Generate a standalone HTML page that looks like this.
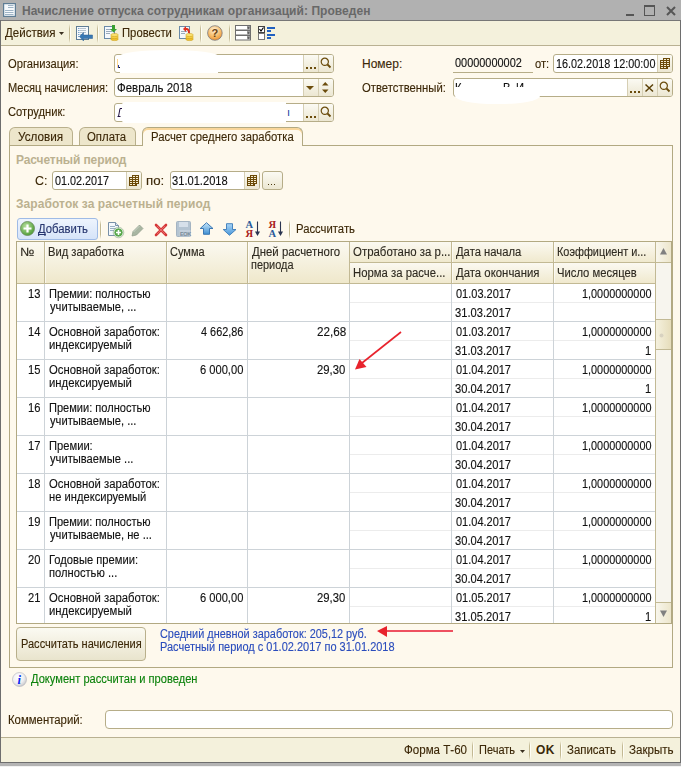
<!DOCTYPE html><html><head><meta charset="utf-8"><style>
*{margin:0;padding:0;box-sizing:border-box}
html,body{width:681px;height:767px;overflow:hidden;background:#c4c4c4}
body{position:relative;font-family:"Liberation Sans",sans-serif}
.t{position:absolute;font:11px/13px "Liberation Sans",sans-serif;white-space:pre;color:#1c1c1c;letter-spacing:0.2px}
.f{position:absolute;font:12px/13px "Liberation Sans",sans-serif;white-space:pre;color:#111;transform-origin:0 0;-webkit-text-stroke:0.12px currentColor}
.w4{letter-spacing:0.4px}
.tb{color:#3c2808}
.b{font-weight:bold}
.grp{color:#bbb190;font:bold 12px/13px "Liberation Sans",sans-serif;letter-spacing:-0.1px}
.fld{position:absolute;background:#fff;border:1px solid #b6ad88;border-radius:3px}
.btn{position:absolute;background:linear-gradient(#fbfaf3,#ece7d2);border-left:1px solid #d6cfb4}
.sep{position:absolute;width:2px;background:linear-gradient(90deg,#c3b993 50%,#fffef6 50%);-webkit-mask-image:linear-gradient(transparent,#000 25%,#000 75%,transparent)}
svg{position:absolute;overflow:visible}
</style></head><body>
<div style="position:absolute;left:0px;top:0px;width:681px;height:767px;background:#c4c4c4"></div>
<div style="position:absolute;left:0px;top:0px;width:681px;height:20px;background:#b1b1b1"></div>
<div style="position:absolute;left:0px;top:20px;width:681px;height:1px;background:#777"></div>
<div style="position:absolute;left:0px;top:20px;width:1px;height:743px;background:#6e6e6e"></div>
<div style="position:absolute;left:680px;top:20px;width:1px;height:743px;background:#6e6e6e"></div>
<div style="position:absolute;left:1px;top:21px;width:679px;height:24px;background:#f4f1dc"></div>
<div style="position:absolute;left:1px;top:45px;width:679px;height:1px;background:#b9b192"></div>
<div style="position:absolute;left:1px;top:46px;width:679px;height:691px;background:#fef9ed"></div>
<div style="position:absolute;left:1px;top:737px;width:679px;height:1px;background:#b9b192"></div>
<div style="position:absolute;left:1px;top:738px;width:679px;height:24px;background:#f4f1dc"></div>
<div style="position:absolute;left:0px;top:762px;width:681px;height:1px;background:#6e6e6e"></div>
<div style="position:absolute;left:0px;top:763px;width:681px;height:3px;background:#b4b4b4"></div>
<div style="position:absolute;left:0px;top:766px;width:681px;height:1px;background:#f2f2f2"></div>
<svg style="left:3px;top:3px" width="13" height="14"><rect x="0.6" y="0.6" width="11.8" height="12.8" fill="#f6f9fc" stroke="#5f7d95" stroke-width="1.2"/><g stroke="#9fb4c6"><line x1="5" y1="2.5" x2="10.5" y2="2.5"/><line x1="5" y1="4.5" x2="10.5" y2="4.5"/><line x1="2" y1="7.5" x2="10.5" y2="7.5"/><line x1="2" y1="9.5" x2="10.5" y2="9.5"/><line x1="2" y1="11.5" x2="10.5" y2="11.5"/></g></svg>
<div class="t b" style="left:22px;top:5px;font-size:12px;color:#686868;letter-spacing:0.05px">Начисление отпуска сотрудникам организаций: Проведен</div>
<div style="position:absolute;left:626px;top:14px;width:8px;height:2px;background:#555"></div>
<div style="position:absolute;left:644px;top:5px;width:11px;height:11px;border:1px solid #555;border-top-width:2px"></div>
<svg style="left:666px;top:6px" width="10" height="10"><path d="M1 1L9 9M9 1L1 9" stroke="#555" stroke-width="2"/></svg>
<div class="f tb" style="left:5.00px;top:27px;transform:scaleX(0.9608);">Действия</div>
<svg style="left:59px;top:32px" width="5" height="3"><path d="M0 0H5L2.5 3Z" fill="#3a3020"/></svg>
<div class="sep" style="left:69px;top:24px;height:19px"></div>
<svg style="left:76px;top:26px" width="17" height="15"><rect x="0.5" y="0.5" width="12" height="13" fill="#f6f9fc" stroke="#5f7d95"/><g stroke="#b4c2ce"><line x1="4" y1="2.5" x2="10" y2="2.5"/><line x1="4" y1="4.5" x2="10" y2="4.5"/><line x1="4" y1="6.5" x2="10" y2="6.5"/><line x1="4" y1="8.5" x2="6" y2="8.5"/></g><g stroke="#7aa4cc"><line x1="2" y1="2.5" x2="3.5" y2="2.5"/><line x1="2" y1="4.5" x2="3.5" y2="4.5"/><line x1="2" y1="6.5" x2="3.5" y2="6.5"/><line x1="2" y1="8.5" x2="3.5" y2="8.5"/><line x1="2" y1="10.5" x2="3.5" y2="10.5"/></g><path d="M3.5 10.5L7.5 6.5V9H16.5V12.5H7.5V15Z" fill="#3878b4" stroke="#2a5e92" stroke-width="0.5"/></svg>
<div class="sep" style="left:97px;top:24px;height:19px"></div>
<svg style="left:104px;top:25px" width="15" height="16"><rect x="0.5" y="1.5" width="10" height="12" fill="#f4f8fc" stroke="#6a8aa8"/><g stroke="#9ab"><line x1="2" y1="4.5" x2="8" y2="4.5"/><line x1="2" y1="6.5" x2="8" y2="6.5"/><line x1="2" y1="8.5" x2="6" y2="8.5"/></g><path d="M8 0V4H6L9.5 7.5L13 4H11V0Z" fill="#3aa030"/><g stroke="#c89a10" stroke-width="0.5"><ellipse cx="10.5" cy="14" rx="3.8" ry="1.6" fill="#f0c030"/><ellipse cx="10.5" cy="12" rx="3.8" ry="1.6" fill="#f6d048"/><ellipse cx="10.5" cy="10" rx="3.8" ry="1.6" fill="#fae070"/></g></svg>
<div class="f tb" style="left:122.06px;top:27px;transform:scaleX(0.9400);">Провести</div>
<svg style="left:179px;top:25px" width="15" height="16"><rect x="0.5" y="1.5" width="10" height="12" fill="#f4f8fc" stroke="#6a8aa8"/><g stroke="#9ab"><line x1="2" y1="6.5" x2="8" y2="6.5"/><line x1="2" y1="8.5" x2="6" y2="8.5"/></g><path d="M4 4L7 1V3C10 3 11 5 11 8H9C9 6 8.5 5 7 5V7Z" fill="#e03020"/><g stroke="#c89a10" stroke-width="0.5"><ellipse cx="10.5" cy="14" rx="3.8" ry="1.6" fill="#f0c030"/><ellipse cx="10.5" cy="12" rx="3.8" ry="1.6" fill="#f6d048"/><ellipse cx="10.5" cy="10" rx="3.8" ry="1.6" fill="#fae070"/></g></svg>
<div class="sep" style="left:200px;top:24px;height:19px"></div>
<svg style="left:207px;top:25px" width="16" height="16"><defs><radialGradient id="hg" cx="0.45" cy="0.3" r="0.75"><stop offset="0" stop-color="#fff0d8"/><stop offset="0.55" stop-color="#f8c070"/><stop offset="1" stop-color="#e88a28"/></radialGradient></defs><circle cx="7.9" cy="8" r="7.3" fill="url(#hg)" stroke="#7a7a80" stroke-width="0.8"/><text x="7.9" y="12.3" font-family="Liberation Sans" font-weight="bold" font-size="11" text-anchor="middle" fill="#6a4212">?</text></svg>
<div class="sep" style="left:229px;top:24px;height:19px"></div>
<svg style="left:235px;top:25px" width="16" height="16"><g fill="#fff" stroke="#6e6e6e"><rect x="0.5" y="0.5" width="15" height="4.5"/><rect x="0.5" y="5.5" width="15" height="4.5"/><rect x="0.5" y="10.5" width="15" height="4.5"/></g><g fill="#9a9a9a"><rect x="12" y="1" width="3" height="3.5"/><rect x="12" y="6" width="3" height="3.5"/><rect x="12" y="11" width="3" height="3.5"/></g><g fill="#222"><path d="M12.5 2.5H14.5L13.5 3.7Z"/><path d="M12.5 7.5H14.5L13.5 8.7Z"/><path d="M12.5 12.5H14.5L13.5 13.7Z"/></g></svg>
<svg style="left:258px;top:26px" width="17" height="14"><rect x="0.5" y="0.5" width="6" height="6" fill="#fff" stroke="#444"/><path d="M1.5 3L3 5L5.5 1.5" stroke="#000" fill="none" stroke-width="1.2"/><rect x="0.5" y="7.5" width="6" height="6" fill="#fff" stroke="#777"/><g fill="#2060c0"><rect x="9" y="1" width="8" height="2"/><rect x="9" y="4" width="4" height="2"/><rect x="9" y="8" width="8" height="2"/><rect x="9" y="11" width="4" height="2"/></g></svg>
<div class="f tb" style="left:8.07px;top:58px;transform:scaleX(0.9315);">Организация:</div>
<div class="f tb" style="left:8.08px;top:82px;transform:scaleX(0.9238);">Месяц начисления:</div>
<div class="f tb" style="left:8.07px;top:106px;transform:scaleX(0.9322);">Сотрудник:</div>
<div class="fld" style="left:114px;top:54px;width:220px;height:19px;overflow:hidden">
<div class="btn" style="left:203px;top:0;width:15px;height:17px"></div>
<svg style="left:205px;top:2px" width="12" height="12"><circle cx="4.8" cy="4.8" r="3.6" fill="none" stroke="#6b4c0c" stroke-width="1.2"/><path d="M7.5 7.5L10.5 10.5" stroke="#6b4c0c" stroke-width="1.8"/></svg>
<div class="btn" style="left:188px;top:0;width:15px;height:17px"></div>
<svg style="left:191px;top:12px" width="10" height="2"><g fill="#6b4c0c"><rect x="0" y="0" width="2" height="2"/><rect x="4" y="0" width="2" height="2"/><rect x="8" y="0" width="2" height="2"/></g></svg>
</div>
<div class="fld" style="left:114px;top:78px;width:220px;height:19px;overflow:hidden">
<div class="btn" style="left:203px;top:0;width:15px;height:17px"></div>
<svg style="left:207px;top:3px" width="7" height="11"><path d="M0 3.5H6.5L3.25 0Z M0 7.5H6.5L3.25 11Z" fill="#6b4c0c"/></svg>
<div class="btn" style="left:188px;top:0;width:15px;height:17px"></div>
<svg style="left:191px;top:7px" width="8" height="4"><path d="M0 0H8L4 4Z" fill="#6b4c0c"/></svg>
</div>
<div class="fld" style="left:114px;top:103px;width:220px;height:19px;overflow:hidden">
<div class="btn" style="left:203px;top:0;width:15px;height:17px"></div>
<svg style="left:205px;top:2px" width="12" height="12"><circle cx="4.8" cy="4.8" r="3.6" fill="none" stroke="#6b4c0c" stroke-width="1.2"/><path d="M7.5 7.5L10.5 10.5" stroke="#6b4c0c" stroke-width="1.8"/></svg>
<div class="btn" style="left:188px;top:0;width:15px;height:17px"></div>
<svg style="left:191px;top:12px" width="10" height="2"><g fill="#6b4c0c"><rect x="0" y="0" width="2" height="2"/><rect x="4" y="0" width="2" height="2"/><rect x="8" y="0" width="2" height="2"/></g></svg>
</div>
<div class="f " style="left:117.05px;top:82px;transform:scaleX(0.9539);">Февраль 2018</div>
<div style="position:absolute;left:117px;top:59px;width:1px;height:9px;background:#ffd890"></div>
<div style="position:absolute;left:118px;top:65px;width:1px;height:3px;background:#3040a0"></div>
<div style="position:absolute;left:119px;top:67px;width:1px;height:1px;background:#000"></div>
<svg style="left:117px;top:107px" width="6" height="11"><path d="M3 1.5H5.5M3 1.5L1.5 9.5M0.5 9.5H3.5" stroke="#201040" stroke-width="1" fill="none"/></svg>
<div style="position:absolute;left:120px;top:50px;width:98px;height:23px;background:#fff;border-radius:50px 50px 0 0/6px 6px 0 0"></div>
<div style="position:absolute;left:122px;top:102px;width:164px;height:21px;background:#fff;border-radius:3px 0 0 3px"></div>
<div style="position:absolute;left:130px;top:102px;width:150px;height:2px;background:#fff"></div>
<div class="t " style="left:287px;top:106px;color:#2040a0">ı</div>
<div class="f tb" style="left:362.00px;top:58px;transform:scaleX(1.0000);">Номер:</div>
<div class="f tb" style="left:362.06px;top:82px;transform:scaleX(0.9419);">Ответственный:</div>
<div class="f " style="left:455.00px;top:57px;transform:scaleX(0.9097);">00000000002</div>
<div style="position:absolute;left:453px;top:72px;width:80px;height:1px;background:#b6ad88"></div>
<div class="f tb" style="left:535.07px;top:58px;transform:scaleX(0.9310);">от:</div>
<div class="fld" style="left:553px;top:54px;width:120px;height:19px;overflow:hidden">
<div class="btn" style="left:103px;top:0;width:15px;height:17px"></div>
<svg style="left:106px;top:3px" width="11" height="11" shape-rendering="crispEdges"><g fill="#6b4a08"><rect x="3" y="0" width="7" height="9"/><rect x="0" y="2" width="8" height="9"/></g><g fill="#f4ecd0"><rect x="4" y="1" width="2" height="1"/><rect x="7" y="1" width="2" height="1"/><rect x="1" y="3" width="2" height="1"/><rect x="4" y="3" width="2" height="1"/><rect x="7" y="3" width="2" height="1"/><rect x="1" y="5" width="2" height="1"/><rect x="4" y="5" width="2" height="1"/><rect x="7" y="5" width="2" height="1"/><rect x="1" y="7" width="2" height="1"/><rect x="4" y="7" width="2" height="1"/><rect x="7" y="7" width="2" height="1"/><rect x="1" y="9" width="2" height="1"/><rect x="4" y="9" width="2" height="1"/></g></svg>
</div>
<div class="f " style="left:556.10px;top:58px;transform:scaleX(0.9028);">16.02.2018 12:00:00</div>
<div class="fld" style="left:453px;top:78px;width:220px;height:19px;overflow:hidden">
<div class="btn" style="left:203px;top:0;width:15px;height:17px"></div>
<svg style="left:205px;top:2px" width="12" height="12"><circle cx="4.8" cy="4.8" r="3.6" fill="none" stroke="#6b4c0c" stroke-width="1.2"/><path d="M7.5 7.5L10.5 10.5" stroke="#6b4c0c" stroke-width="1.8"/></svg>
<div class="btn" style="left:188px;top:0;width:15px;height:17px"></div>
<svg style="left:191px;top:5px" width="9" height="8"><path d="M0.5 0.5L8 7.5M8 0.5L0.5 7.5" stroke="#5a4008" stroke-width="1.5"/></svg>
<div class="btn" style="left:173px;top:0;width:15px;height:17px"></div>
<svg style="left:176px;top:12px" width="10" height="2"><g fill="#6b4c0c"><rect x="0" y="0" width="2" height="2"/><rect x="4" y="0" width="2" height="2"/><rect x="8" y="0" width="2" height="2"/></g></svg>
</div>
<div class="f " style="left:455.07px;top:82px;transform:scaleX(0.9310);">К</div>
<div class="f " style="left:503.07px;top:82px;transform:scaleX(0.9310);">В.</div>
<div class="f " style="left:516.07px;top:82px;transform:scaleX(0.9310);">И.</div>
<div style="position:absolute;left:455px;top:87px;width:85px;height:17px;background:#fff;border-radius:0 0 40px 40px/0 0 8px 8px"></div>
<div style="position:absolute;left:9px;top:145px;width:664px;height:523px;border:1px solid #b2a982;background:#fef9ed"></div>
<div style="position:absolute;left:9px;top:127px;width:64px;height:18px;background:#ede6cb;border:1px solid #b9b08c;border-bottom:none;border-radius:6px 6px 0 0"></div>
<div style="position:absolute;left:79px;top:127px;width:57px;height:18px;background:#ede6cb;border:1px solid #b9b08c;border-bottom:none;border-radius:6px 6px 0 0"></div>
<div style="position:absolute;left:142px;top:127px;width:161px;height:19px;background:#fef9ed;border:1px solid #b2a982;border-bottom:none;border-radius:6px 6px 0 0;box-shadow:inset 0 2px 0 #f9d69a"></div>
<div class="f tb" style="left:18.02px;top:131px;transform:scaleX(0.9773);">Условия</div>
<div class="f tb" style="left:87.05px;top:131px;transform:scaleX(0.9487);">Оплата</div>
<div class="f tb" style="left:151.06px;top:131px;transform:scaleX(0.9423);">Расчет среднего заработка</div>
<div class="t grp" style="left:16px;top:154px;">Расчетный период</div>
<div class="f tb" style="left:34.97px;top:175px;transform:scaleX(1.0333);">С:</div>
<div class="fld" style="left:52px;top:171px;width:90px;height:19px;overflow:hidden">
<div class="btn" style="left:73px;top:0;width:15px;height:17px"></div>
<svg style="left:76px;top:3px" width="11" height="11" shape-rendering="crispEdges"><g fill="#6b4a08"><rect x="3" y="0" width="7" height="9"/><rect x="0" y="2" width="8" height="9"/></g><g fill="#f4ecd0"><rect x="4" y="1" width="2" height="1"/><rect x="7" y="1" width="2" height="1"/><rect x="1" y="3" width="2" height="1"/><rect x="4" y="3" width="2" height="1"/><rect x="7" y="3" width="2" height="1"/><rect x="1" y="5" width="2" height="1"/><rect x="4" y="5" width="2" height="1"/><rect x="7" y="5" width="2" height="1"/><rect x="1" y="7" width="2" height="1"/><rect x="4" y="7" width="2" height="1"/><rect x="7" y="7" width="2" height="1"/><rect x="1" y="9" width="2" height="1"/><rect x="4" y="9" width="2" height="1"/></g></svg>
</div>
<div class="f " style="left:55.20px;top:175px;transform:scaleX(0.9000);">01.02.2017</div>
<div class="f tb" style="left:145.89px;top:175px;transform:scaleX(1.1071);">по:</div>
<div class="fld" style="left:170px;top:171px;width:90px;height:19px;overflow:hidden">
<div class="btn" style="left:73px;top:0;width:15px;height:17px"></div>
<svg style="left:76px;top:3px" width="11" height="11" shape-rendering="crispEdges"><g fill="#6b4a08"><rect x="3" y="0" width="7" height="9"/><rect x="0" y="2" width="8" height="9"/></g><g fill="#f4ecd0"><rect x="4" y="1" width="2" height="1"/><rect x="7" y="1" width="2" height="1"/><rect x="1" y="3" width="2" height="1"/><rect x="4" y="3" width="2" height="1"/><rect x="7" y="3" width="2" height="1"/><rect x="1" y="5" width="2" height="1"/><rect x="4" y="5" width="2" height="1"/><rect x="7" y="5" width="2" height="1"/><rect x="1" y="7" width="2" height="1"/><rect x="4" y="7" width="2" height="1"/><rect x="7" y="7" width="2" height="1"/><rect x="1" y="9" width="2" height="1"/><rect x="4" y="9" width="2" height="1"/></g></svg>
</div>
<div class="f " style="left:172.27px;top:175px;transform:scaleX(0.9276);">31.01.2018</div>
<div class="fld" style="left:262px;top:171px;width:21px;height:19px;background:linear-gradient(#fbfaf3,#ece7d2)"></div>
<svg style="left:268px;top:184px" width="9" height="1"><g fill="#4a3a10"><rect x="0" width="1" height="1"/><rect x="3" width="1" height="1"/><rect x="6" width="1" height="1"/></g></svg>
<div class="t grp" style="left:16px;top:198px;letter-spacing:0.075px">Заработок за расчетный период</div>
<div style="position:absolute;left:17px;top:218px;width:81px;height:22px;border:1px solid #9fbbe6;border-radius:3px;background:linear-gradient(#eef4fd,#d6e4f9)"></div>
<svg style="left:20px;top:221px" width="16" height="16"><defs><radialGradient id="gg" cx="0.4" cy="0.35" r="0.7"><stop offset="0" stop-color="#b8e0a0"/><stop offset="1" stop-color="#4a9a30"/></radialGradient></defs><circle cx="7.5" cy="7.5" r="7" fill="url(#gg)" stroke="#6a8a5a" stroke-width="0.8"/><path d="M7.5 3.5V11.5M3.5 7.5H11.5" stroke="#fff" stroke-width="2.2"/></svg>
<div class="f " style="left:38.00px;top:223px;transform:scaleX(0.9423);color:#26356e"><u style="text-decoration-skip-ink:none">Д</u>обавить</div>
<div class="sep" style="left:100px;top:220px;height:19px"></div>
<svg style="left:108px;top:222px" width="16" height="16"><path d="M0.5 0.5H7.5L10.5 3.5V13.5H0.5Z" fill="#f4f8fc" stroke="#7890a8"/><path d="M7.5 0.5V3.5H10.5" fill="#dde6ee" stroke="#7890a8"/><g stroke="#9ab0c4"><line x1="2" y1="4.5" x2="7" y2="4.5"/><line x1="2" y1="6.5" x2="8" y2="6.5"/><line x1="2" y1="8.5" x2="6" y2="8.5"/></g><circle cx="10.5" cy="10.5" r="4.6" fill="#58a84a" stroke="#e8f0e8" stroke-width="0.9"/><circle cx="10.5" cy="10.5" r="5.3" fill="none" stroke="#7a9a78" stroke-width="0.5"/><path d="M10.5 8V13M8 10.5H13" stroke="#fff" stroke-width="1.6"/></svg>
<svg style="left:131px;top:223px" width="14" height="14"><path d="M1 13L2 8.5L8.5 2L12 5.5L5.5 12Z" fill="#a9b6a2" stroke="#8e9c8a" stroke-width="0.7"/><path d="M2.5 9L8.5 3" stroke="#c8d2c4" stroke-width="1"/></svg>
<svg style="left:155px;top:224px" width="12" height="12"><path d="M1 1L11 11M11 1L1 11" stroke="#d63838" stroke-width="2.6" stroke-linecap="round"/><path d="M2 2L10 10M10 2L2 10" stroke="#f4a0a0" stroke-width="0.8" stroke-opacity="0.6"/></svg>
<svg style="left:176px;top:221px" width="15" height="16"><rect x="0.5" y="0.5" width="14" height="15" rx="1" fill="#b4c4d2" stroke="#a4b4c2"/><rect x="3" y="1" width="9" height="5" fill="#d6e0ea"/><rect x="3.5" y="9" width="11" height="6.5" fill="#c4d0dc"/><text x="4" y="15" font-family="Liberation Sans" font-weight="bold" font-size="5.5" letter-spacing="-0.4" fill="#7a8a98">EOK</text></svg>
<svg style="left:200px;top:222px" width="14" height="13"><defs><linearGradient id="ua" x1="0" y1="0" x2="0" y2="1"><stop offset="0" stop-color="#c6e6fb"/><stop offset="1" stop-color="#3f8fd2"/></linearGradient></defs><path d="M6.5 0.7L13 6.5H9.5V12.3H3.5V6.5H0.2Z" fill="url(#ua)" stroke="#2f6eae" stroke-width="0.9" stroke-linejoin="round"/></svg>
<svg style="left:223px;top:223px" width="14" height="13"><defs><linearGradient id="da" x1="0" y1="0" x2="0" y2="1"><stop offset="0" stop-color="#a8d4f6"/><stop offset="1" stop-color="#4a98da"/></linearGradient></defs><path d="M6.5 12.3L13 6.5H9.5V0.7H3.5V6.5H0.2Z" fill="url(#da)" stroke="#3a7ab8" stroke-width="0.9" stroke-linejoin="round"/></svg>
<svg style="left:245px;top:220px" width="16" height="17"><text x="0.5" y="8" font-family="Liberation Serif" font-weight="bold" font-size="10.5" fill="#2a5a9a">A</text><text x="0.5" y="16.5" font-family="Liberation Serif" font-weight="bold" font-size="10.5" fill="#a82020">Я</text><path d="M12.5 1.5V13" stroke="#2a3450" stroke-width="1.1"/><path d="M10 11.5L12.5 16L15 11.5Z" fill="#2a3450"/></svg>
<svg style="left:268px;top:220px" width="16" height="17"><text x="0.5" y="8" font-family="Liberation Serif" font-weight="bold" font-size="10.5" fill="#a82020">Я</text><text x="0.5" y="16.5" font-family="Liberation Serif" font-weight="bold" font-size="10.5" fill="#2a5a9a">A</text><path d="M12.5 1.5V13" stroke="#2a3450" stroke-width="1.1"/><path d="M10 11.5L12.5 16L15 11.5Z" fill="#2a3450"/></svg>
<div class="sep" style="left:289px;top:220px;height:19px"></div>
<div class="f tb" style="left:296.06px;top:223px;transform:scaleX(0.9417);">Рассчитать</div>
<div style="position:absolute;left:16px;top:241px;width:656px;height:383px;border:1px solid #b2a982;background:#fff"></div>
<div style="position:absolute;left:17px;top:242px;width:638px;height:41px;background:linear-gradient(#fbf9f1,#efe8cb)"></div>
<div style="position:absolute;left:17px;top:283px;width:638px;height:1px;background:#c2b994"></div>
<div style="position:absolute;left:44px;top:242px;width:1px;height:41px;background:#c2b994"></div>
<div style="position:absolute;left:45px;top:242px;width:1px;height:41px;background:rgba(255,255,255,0.6)"></div>
<div style="position:absolute;left:166px;top:242px;width:1px;height:41px;background:#c2b994"></div>
<div style="position:absolute;left:167px;top:242px;width:1px;height:41px;background:rgba(255,255,255,0.6)"></div>
<div style="position:absolute;left:247px;top:242px;width:1px;height:41px;background:#c2b994"></div>
<div style="position:absolute;left:248px;top:242px;width:1px;height:41px;background:rgba(255,255,255,0.6)"></div>
<div style="position:absolute;left:349px;top:242px;width:1px;height:41px;background:#c2b994"></div>
<div style="position:absolute;left:350px;top:242px;width:1px;height:41px;background:rgba(255,255,255,0.6)"></div>
<div style="position:absolute;left:451px;top:242px;width:1px;height:41px;background:#c2b994"></div>
<div style="position:absolute;left:452px;top:242px;width:1px;height:41px;background:rgba(255,255,255,0.6)"></div>
<div style="position:absolute;left:553px;top:242px;width:1px;height:41px;background:#c2b994"></div>
<div style="position:absolute;left:554px;top:242px;width:1px;height:41px;background:rgba(255,255,255,0.6)"></div>
<div style="position:absolute;left:350px;top:242px;width:305px;height:20px;background:linear-gradient(#fbf9f1,#f0e9ce)"></div>
<div style="position:absolute;left:350px;top:263px;width:305px;height:20px;background:linear-gradient(#fbf9f1,#f0e9ce)"></div>
<div style="position:absolute;left:451px;top:242px;width:1px;height:41px;background:#c2b994"></div>
<div style="position:absolute;left:452px;top:242px;width:1px;height:41px;background:rgba(255,255,255,0.6)"></div>
<div style="position:absolute;left:553px;top:242px;width:1px;height:41px;background:#c2b994"></div>
<div style="position:absolute;left:554px;top:242px;width:1px;height:41px;background:rgba(255,255,255,0.6)"></div>
<div style="position:absolute;left:350px;top:262px;width:305px;height:1px;background:#c2b994"></div>
<div style="position:absolute;left:350px;top:302px;width:305px;height:1px;background:#ececec"></div>
<div style="position:absolute;left:17px;top:321px;width:638px;height:1px;background:#cdd3d8"></div>
<div style="position:absolute;left:350px;top:340px;width:305px;height:1px;background:#ececec"></div>
<div style="position:absolute;left:17px;top:359px;width:638px;height:1px;background:#cdd3d8"></div>
<div style="position:absolute;left:350px;top:378px;width:305px;height:1px;background:#ececec"></div>
<div style="position:absolute;left:17px;top:397px;width:638px;height:1px;background:#cdd3d8"></div>
<div style="position:absolute;left:350px;top:416px;width:305px;height:1px;background:#ececec"></div>
<div style="position:absolute;left:17px;top:435px;width:638px;height:1px;background:#cdd3d8"></div>
<div style="position:absolute;left:350px;top:454px;width:305px;height:1px;background:#ececec"></div>
<div style="position:absolute;left:17px;top:473px;width:638px;height:1px;background:#cdd3d8"></div>
<div style="position:absolute;left:350px;top:492px;width:305px;height:1px;background:#ececec"></div>
<div style="position:absolute;left:17px;top:511px;width:638px;height:1px;background:#cdd3d8"></div>
<div style="position:absolute;left:350px;top:530px;width:305px;height:1px;background:#ececec"></div>
<div style="position:absolute;left:17px;top:549px;width:638px;height:1px;background:#cdd3d8"></div>
<div style="position:absolute;left:350px;top:568px;width:305px;height:1px;background:#ececec"></div>
<div style="position:absolute;left:17px;top:587px;width:638px;height:1px;background:#cdd3d8"></div>
<div style="position:absolute;left:350px;top:606px;width:305px;height:1px;background:#ececec"></div>
<div style="position:absolute;left:44px;top:284px;width:1px;height:339px;background:#cdd3d8"></div>
<div style="position:absolute;left:166px;top:284px;width:1px;height:339px;background:#cdd3d8"></div>
<div style="position:absolute;left:247px;top:284px;width:1px;height:339px;background:#cdd3d8"></div>
<div style="position:absolute;left:349px;top:284px;width:1px;height:339px;background:#cdd3d8"></div>
<div style="position:absolute;left:451px;top:284px;width:1px;height:339px;background:#cdd3d8"></div>
<div style="position:absolute;left:553px;top:284px;width:1px;height:339px;background:#cdd3d8"></div>
<div style="position:absolute;left:655px;top:242px;width:1px;height:381px;background:#c2b994"></div>
<div style="position:absolute;left:656px;top:242px;width:15px;height:381px;background:#f7f5ee"></div>
<div style="position:absolute;left:656px;top:242px;width:15px;height:20px;background:linear-gradient(90deg,#f8f6ec,#ede6cc)"></div>
<div style="position:absolute;left:656px;top:262px;width:15px;height:1px;background:#c2b994"></div>
<div style="position:absolute;left:656px;top:603px;width:15px;height:20px;background:linear-gradient(90deg,#f8f6ec,#ede6cc)"></div>
<div style="position:absolute;left:656px;top:602px;width:15px;height:1px;background:#c2b994"></div>
<div style="position:absolute;left:656px;top:319px;width:15px;height:31px;background:linear-gradient(90deg,#f5f1de,#e6ddbb);border-top:1px solid #c2b994;border-bottom:1px solid #c2b994"></div>
<svg style="left:659px;top:333px" width="5" height="5"><circle cx="2.5" cy="2.5" r="2" fill="#d8d2c0"/></svg>
<svg style="left:660px;top:248px" width="7" height="7"><path d="M0 6.5H7L3.5 0Z" fill="#808080"/></svg>
<svg style="left:660px;top:610px" width="7" height="7"><path d="M0 0.5H7L3.5 7Z" fill="#808080"/></svg>
<div class="f " style="left:19.87px;top:246px;transform:scaleX(1.1300);color:#2e2a20">№</div>
<div class="f " style="left:48.27px;top:246px;transform:scaleX(0.9316);color:#2e2a20">Вид заработка</div>
<div class="f " style="left:170.08px;top:246px;transform:scaleX(0.9167);color:#2e2a20">Сумма</div>
<div class="f " style="left:251.80px;top:246px;transform:scaleX(0.9505);color:#2e2a20">Дней расчетного</div>
<div class="f " style="left:251.09px;top:259px;transform:scaleX(0.9111);color:#2e2a20">периода</div>
<div class="f " style="left:352.65px;top:246px;transform:scaleX(0.9525);color:#2e2a20">Отработано за р...</div>
<div class="f " style="left:352.66px;top:267px;transform:scaleX(0.9442);color:#2e2a20">Норма за расче...</div>
<div class="f " style="left:456.00px;top:246px;transform:scaleX(0.9382);color:#2e2a20">Дата начала</div>
<div class="f " style="left:456.00px;top:267px;transform:scaleX(0.9477);color:#2e2a20">Дата окончания</div>
<div class="f " style="left:557.09px;top:246px;transform:scaleX(0.9062);color:#2e2a20">Коэффициент и...</div>
<div class="f " style="left:557.06px;top:267px;transform:scaleX(0.9373);color:#2e2a20">Число месяцев</div>
<div class="f " style="left:28.33px;top:288px;transform:scaleX(0.9310);">13</div>
<div class="f " style="left:48.58px;top:288px;transform:scaleX(0.9213);">Премии: полностью</div>
<div class="f " style="left:49.50px;top:301px;transform:scaleX(0.9310);">учитываемые, ...</div>
<div class="f " style="left:456.00px;top:288px;transform:scaleX(0.9153);">01.03.2017</div>
<div class="f " style="left:455.07px;top:307px;transform:scaleX(0.9310);">31.03.2017</div>
<div class="f " style="left:581.89px;top:288px;transform:scaleX(0.9054);">1,0000000000</div>
<div class="f " style="left:28.33px;top:326px;transform:scaleX(0.9310);">14</div>
<div class="f " style="left:48.56px;top:326px;transform:scaleX(0.9417);">Основной заработок:</div>
<div class="f " style="left:48.56px;top:339px;transform:scaleX(0.9447);">индексируемый</div>
<div class="f " style="left:201.00px;top:326px;transform:scaleX(0.9067);">4 662,86</div>
<div class="f " style="left:317.03px;top:326px;transform:scaleX(0.9741);">22,68</div>
<div class="f " style="left:456.00px;top:326px;transform:scaleX(0.9153);">01.03.2017</div>
<div class="f " style="left:455.07px;top:345px;transform:scaleX(0.9310);">31.03.2017</div>
<div class="f " style="left:581.89px;top:326px;transform:scaleX(0.9054);">1,0000000000</div>
<div class="f " style="left:645.34px;top:345px;transform:scaleX(0.9310);">1</div>
<div class="f " style="left:28.33px;top:364px;transform:scaleX(0.9310);">15</div>
<div class="f " style="left:48.56px;top:364px;transform:scaleX(0.9417);">Основной заработок:</div>
<div class="f " style="left:48.56px;top:377px;transform:scaleX(0.9447);">индексируемый</div>
<div class="f " style="left:200.07px;top:364px;transform:scaleX(0.9273);">6 000,00</div>
<div class="f " style="left:317.06px;top:364px;transform:scaleX(0.9393);">29,30</div>
<div class="f " style="left:456.00px;top:364px;transform:scaleX(0.9153);">01.04.2017</div>
<div class="f " style="left:455.07px;top:383px;transform:scaleX(0.9310);">30.04.2017</div>
<div class="f " style="left:581.89px;top:364px;transform:scaleX(0.9054);">1,0000000000</div>
<div class="f " style="left:645.34px;top:383px;transform:scaleX(0.9310);">1</div>
<div class="f " style="left:28.33px;top:402px;transform:scaleX(0.9310);">16</div>
<div class="f " style="left:48.58px;top:402px;transform:scaleX(0.9213);">Премии: полностью</div>
<div class="f " style="left:49.50px;top:415px;transform:scaleX(0.9310);">учитываемые, ...</div>
<div class="f " style="left:456.00px;top:402px;transform:scaleX(0.9153);">01.04.2017</div>
<div class="f " style="left:455.07px;top:421px;transform:scaleX(0.9310);">30.04.2017</div>
<div class="f " style="left:581.89px;top:402px;transform:scaleX(0.9054);">1,0000000000</div>
<div class="f " style="left:28.33px;top:440px;transform:scaleX(0.9310);">17</div>
<div class="f " style="left:48.57px;top:440px;transform:scaleX(0.9310);">Премии:</div>
<div class="f " style="left:49.50px;top:453px;transform:scaleX(0.9310);">учитываемые ...</div>
<div class="f " style="left:456.00px;top:440px;transform:scaleX(0.9153);">01.04.2017</div>
<div class="f " style="left:455.07px;top:459px;transform:scaleX(0.9310);">30.04.2017</div>
<div class="f " style="left:581.89px;top:440px;transform:scaleX(0.9054);">1,0000000000</div>
<div class="f " style="left:28.33px;top:478px;transform:scaleX(0.9310);">18</div>
<div class="f " style="left:48.56px;top:478px;transform:scaleX(0.9417);">Основной заработок:</div>
<div class="f " style="left:48.57px;top:491px;transform:scaleX(0.9310);">не индексируемый</div>
<div class="f " style="left:456.00px;top:478px;transform:scaleX(0.9153);">01.04.2017</div>
<div class="f " style="left:455.07px;top:497px;transform:scaleX(0.9310);">30.04.2017</div>
<div class="f " style="left:581.89px;top:478px;transform:scaleX(0.9054);">1,0000000000</div>
<div class="f " style="left:28.33px;top:516px;transform:scaleX(0.9310);">19</div>
<div class="f " style="left:48.58px;top:516px;transform:scaleX(0.9213);">Премии: полностью</div>
<div class="f " style="left:49.50px;top:529px;transform:scaleX(0.9310);">учитываемые, не ...</div>
<div class="f " style="left:456.00px;top:516px;transform:scaleX(0.9153);">01.04.2017</div>
<div class="f " style="left:455.07px;top:535px;transform:scaleX(0.9310);">30.04.2017</div>
<div class="f " style="left:581.89px;top:516px;transform:scaleX(0.9054);">1,0000000000</div>
<div class="f " style="left:28.33px;top:554px;transform:scaleX(0.9310);">20</div>
<div class="f " style="left:48.57px;top:554px;transform:scaleX(0.9310);">Годовые премии:</div>
<div class="f " style="left:48.57px;top:567px;transform:scaleX(0.9310);">полностью ...</div>
<div class="f " style="left:456.00px;top:554px;transform:scaleX(0.9153);">01.04.2017</div>
<div class="f " style="left:455.07px;top:573px;transform:scaleX(0.9310);">30.04.2017</div>
<div class="f " style="left:581.89px;top:554px;transform:scaleX(0.9054);">1,0000000000</div>
<div class="f " style="left:28.33px;top:592px;transform:scaleX(0.9310);">21</div>
<div class="f " style="left:48.56px;top:592px;transform:scaleX(0.9417);">Основной заработок:</div>
<div class="f " style="left:48.56px;top:605px;transform:scaleX(0.9447);">индексируемый</div>
<div class="f " style="left:200.07px;top:592px;transform:scaleX(0.9273);">6 000,00</div>
<div class="f " style="left:317.06px;top:592px;transform:scaleX(0.9393);">29,30</div>
<div class="f " style="left:456.00px;top:592px;transform:scaleX(0.9153);">01.05.2017</div>
<div class="f " style="left:455.07px;top:611px;transform:scaleX(0.9310);">31.05.2017</div>
<div class="f " style="left:581.89px;top:592px;transform:scaleX(0.9054);">1,0000000000</div>
<div class="f " style="left:645.34px;top:611px;transform:scaleX(0.9310);">1</div>
<svg style="left:0;top:0" width="681" height="767"><path d="M401 332L362 363" stroke="#e8232d" stroke-width="1.6"/><path d="M355 369.5L359.5 359L366.5 367Z" fill="#e8232d"/><path d="M386 631H453" stroke="#ee5060" stroke-width="1.8"/><path d="M377 631L387 626V637Z" fill="#e8232d"/></svg>
<div style="position:absolute;left:16px;top:627px;width:130px;height:34px;border:1px solid #b9b08c;border-radius:4px;background:linear-gradient(#fbfaf2,#e9e4cd)"></div>
<div class="f tb" style="left:20.58px;top:638px;transform:scaleX(0.9186);">Рассчитать начисления</div>
<div class="f " style="left:159.59px;top:628px;transform:scaleX(0.9080);color:#2a4cbc">Средний дневной заработок: 205,12 руб.</div>
<div class="f " style="left:159.58px;top:641px;transform:scaleX(0.9162);color:#2a4cbc">Расчетный период с 01.02.2017 по 31.01.2018</div>
<svg style="left:12px;top:672px" width="16" height="16"><defs><radialGradient id="ig" cx="0.4" cy="0.35" r="0.7"><stop offset="0" stop-color="#ffffff"/><stop offset="0.6" stop-color="#eeeef0"/><stop offset="1" stop-color="#c4c4c8"/></radialGradient></defs><circle cx="7.5" cy="7.5" r="7" fill="url(#ig)" stroke="#b0b0b8" stroke-width="0.6"/><text x="7.3" y="12.2" font-family="Liberation Serif" font-style="italic" font-weight="bold" font-size="12.5" text-anchor="middle" fill="#0828f0">i</text></svg>
<div class="f " style="left:31.00px;top:673px;transform:scaleX(0.9270);color:#0c820c">Документ рассчитан и проведен</div>
<div class="f tb" style="left:8.05px;top:714px;transform:scaleX(0.9474);">Комментарий:</div>
<div class="fld" style="left:105px;top:710px;width:568px;height:19px;border-radius:4px"></div>
<div class="f tb" style="left:403.64px;top:744px;transform:scaleX(0.9635);">Форма Т-60</div>
<div class="sep" style="left:472px;top:741px;height:19px"></div>
<div class="f tb" style="left:478.78px;top:744px;transform:scaleX(0.9162);">Печать</div>
<svg style="left:520px;top:750px" width="5" height="3"><path d="M0 0H5L2.5 3Z" fill="#3a3020"/></svg>
<div class="sep" style="left:529px;top:741px;height:19px"></div>
<div class="t b tb" style="left:536px;top:744px;font-size:12px;letter-spacing:0.4px">OK</div>
<div class="sep" style="left:560px;top:741px;height:19px"></div>
<div class="f tb" style="left:567.05px;top:744px;transform:scaleX(0.9531);">Записать</div>
<div class="sep" style="left:622px;top:741px;height:19px"></div>
<div class="f tb" style="left:629.03px;top:744px;transform:scaleX(0.9659);">Закрыть</div>
</body></html>
